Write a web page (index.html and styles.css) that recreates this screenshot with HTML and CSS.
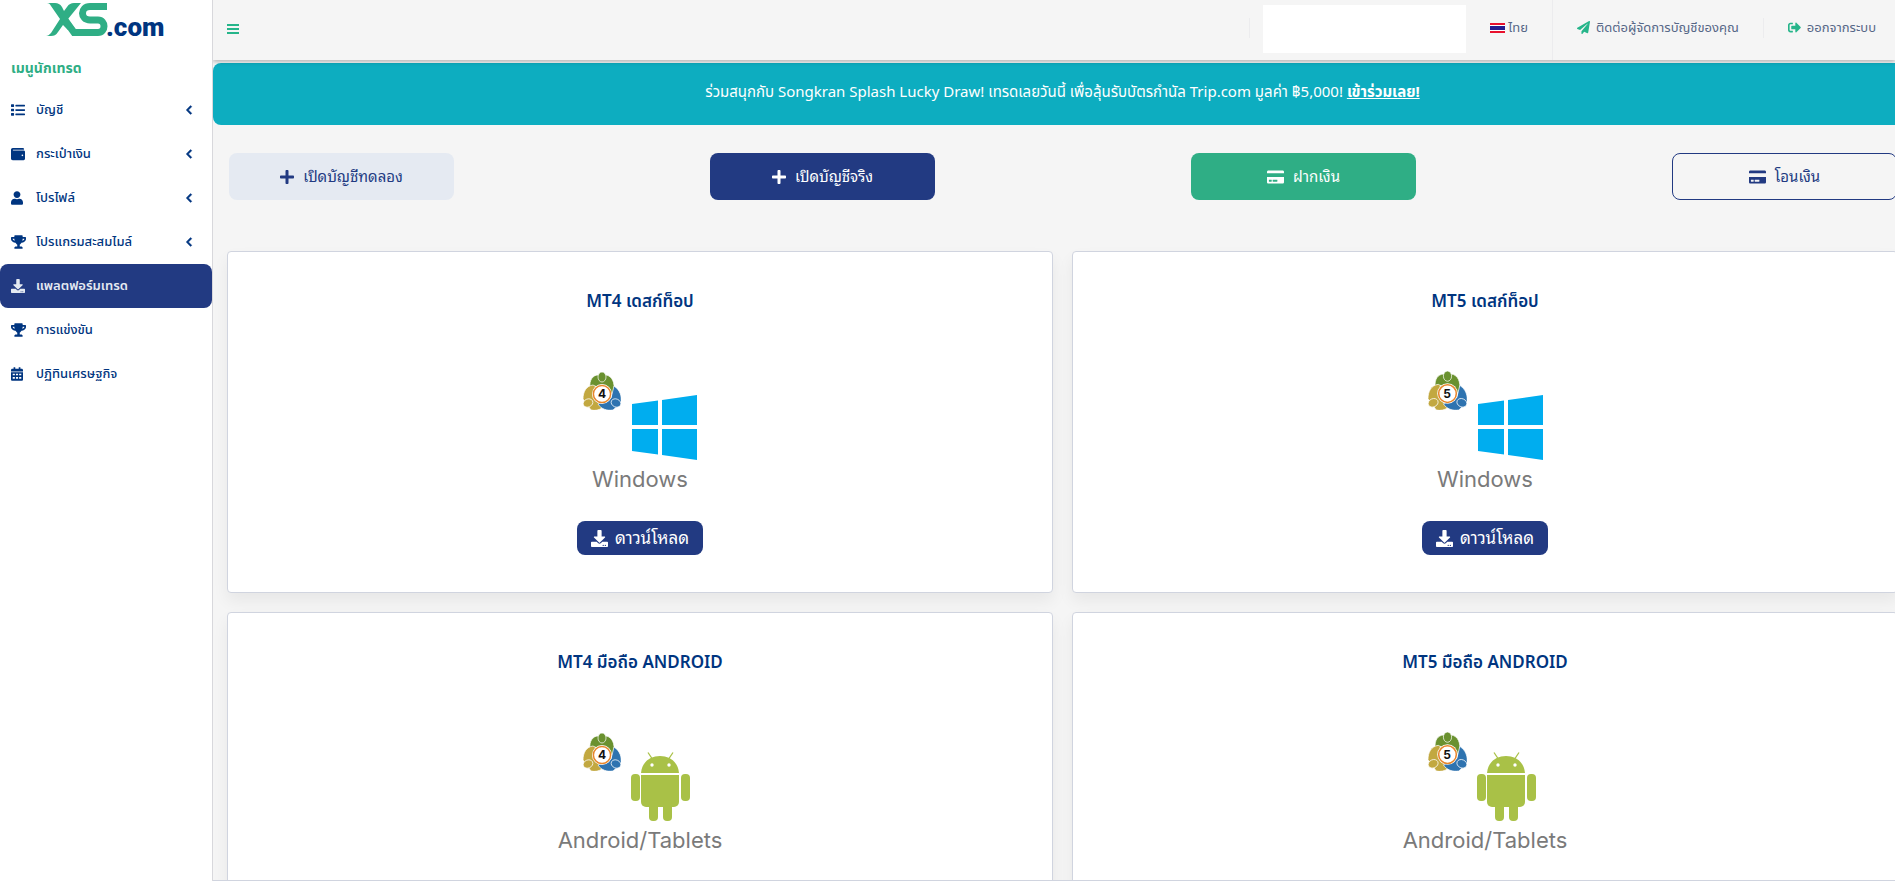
FILE: index.html
```
<!DOCTYPE html>
<html lang="th">
<head>
  <meta charset="UTF-8">
  <meta name="viewport" content="width=device-width, initial-scale=1.0">
  <title>XS.com - แพลตฟอร์มเทรด</title>
  <link rel="stylesheet" href="styles.css">
</head>
<body>
  <!-- shared icons -->
  <svg class="sprite" aria-hidden="true">
    <symbol id="i-list" viewBox="0 0 512 512"><path d="M16 48h80a16 16 0 0 1 16 16v64a16 16 0 0 1-16 16H16a16 16 0 0 1-16-16V64a16 16 0 0 1 16-16zm0 160h80a16 16 0 0 1 16 16v64a16 16 0 0 1-16 16H16a16 16 0 0 1-16-16v-64a16 16 0 0 1 16-16zm0 160h80a16 16 0 0 1 16 16v64a16 16 0 0 1-16 16H16a16 16 0 0 1-16-16v-64a16 16 0 0 1 16-16zM176 64h320a16 16 0 0 1 16 16v32a16 16 0 0 1-16 16H176a16 16 0 0 1-16-16V80a16 16 0 0 1 16-16zm0 160h320a16 16 0 0 1 16 16v32a16 16 0 0 1-16 16H176a16 16 0 0 1-16-16v-32a16 16 0 0 1 16-16zm0 160h320a16 16 0 0 1 16 16v32a16 16 0 0 1-16 16H176a16 16 0 0 1-16-16v-32a16 16 0 0 1 16-16z"/></symbol>
    <symbol id="i-wallet" viewBox="0 0 512 512"><path d="M461.2 128H80c-8.84 0-16-7.16-16-16s7.16-16 16-16h384c8.84 0 16-7.16 16-16 0-26.51-21.49-48-48-48H64C28.65 32 0 60.65 0 96v320c0 35.35 28.65 64 64 64h397.2c28.02 0 50.8-21.53 50.8-48V176c0-26.47-22.78-48-50.8-48zM416 336c-17.67 0-32-14.33-32-32s14.33-32 32-32 32 14.33 32 32-14.33 32-32 32z"/></symbol>
    <symbol id="i-user" viewBox="0 0 448 512"><path d="M224 256c70.7 0 128-57.3 128-128S294.7 0 224 0 96 57.3 96 128s57.3 128 128 128zm89.6 32h-16.7c-22.2 10.2-46.9 16-72.9 16s-50.6-5.8-72.9-16h-16.7C60.2 288 0 348.2 0 422.4V464c0 26.5 21.5 48 48 48h352c26.5 0 48-21.5 48-48v-41.6c0-74.2-60.2-134.4-134.4-134.4z"/></symbol>
    <symbol id="i-trophy" viewBox="0 0 576 512"><path d="M552 64H448V24c0-13.3-10.7-24-24-24H152c-13.3 0-24 10.7-24 24v40H24C10.7 64 0 74.7 0 88v56c0 35.7 22.5 72.4 61.9 100.7 31.5 22.7 69.8 37.1 110 41.7C203.3 338.5 240 360 240 360v72h-48c-35.3 0-64 20.7-64 56v12c0 6.6 5.4 12 12 12h296c6.6 0 12-5.4 12-12v-12c0-35.3-28.7-56-64-56h-48v-72s36.7-21.5 68.1-73.6c40.3-4.6 78.6-19 110-41.7 39.3-28.3 61.9-65 61.9-100.7V88c0-13.3-10.7-24-24-24zM99.3 192.8C74.9 175.2 64 155.6 64 144v-16h64.2c1 32.6 5.8 61.2 12.8 86.2-15.1-5.2-29.2-12.4-41.7-21.4zM512 144c0 16.1-17.7 36.1-35.3 48.8-12.5 9-26.7 16.2-41.8 21.4 7-25 11.8-53.6 12.8-86.2H512v16z"/></symbol>
    <symbol id="i-download" viewBox="0 0 512 512"><path d="M216 0h80c13.3 0 24 10.7 24 24v168h87.7c17.8 0 26.7 21.5 14.1 34.1L269.7 378.3c-7.5 7.5-19.8 7.5-27.3 0L90.1 226.1c-12.6-12.6-3.7-34.1 14.1-34.1H192V24c0-13.3 10.7-24 24-24zm296 376v112c0 13.3-10.7 24-24 24H24c-13.3 0-24-10.7-24-24V376c0-13.3 10.7-24 24-24h146.7l49 49c20.1 20.1 52.5 20.1 72.6 0l49-49H488c13.3 0 24 10.7 24 24zm-124 88c0-11-9-20-20-20s-20 9-20 20 9 20 20 20 20-9 20-20zm64 0c0-11-9-20-20-20s-20 9-20 20 9 20 20 20 20-9 20-20z"/></symbol>
    <symbol id="i-calendar" viewBox="0 0 448 512"><path fill-rule="evenodd" d="M0 160v-48c0-26 22-48 48-48h48V12c0-7 5-12 12-12h40c7 0 12 5 12 12v52h128V12c0-7 5-12 12-12h40c7 0 12 5 12 12v52h48c26 0 48 22 48 48v48zM0 192h448v272c0 26-22 48-48 48H48c-26 0-48-22-48-48zM64 244v56h80v-56zM184 244v56h80v-56zM304 244v56h80v-56zM64 372v60h80v-60zM184 372v60h80v-60zM304 372v60h80v-60z"/></symbol>
    <symbol id="i-left" viewBox="0 0 320 512"><path stroke="currentColor" stroke-width="30" d="M34.52 239.03L228.87 44.69c9.37-9.37 24.57-9.37 33.94 0l22.67 22.67c9.36 9.36 9.37 24.52.04 33.9L131.49 256l154.02 154.75c9.34 9.38 9.32 24.54-.04 33.9l-22.67 22.67c-9.37 9.37-24.57 9.37-33.94 0L34.52 272.97c-9.37-9.37-9.37-24.57 0-33.94z"/></symbol>
    <symbol id="i-plus" viewBox="0 0 448 512"><path d="M416 208H272V64c0-17.67-14.33-32-32-32h-32c-17.67 0-32 14.33-32 32v144H32c-17.67 0-32 14.33-32 32v32c0 17.67 14.33 32 32 32h144v144c0 17.67 14.33 32 32 32h32c17.67 0 32-14.33 32-32V304h144c17.67 0 32-14.33 32-32v-32c0-17.67-14.33-32-32-32z"/></symbol>
    <symbol id="i-card" viewBox="0 0 576 512"><path d="M0 432c0 26.5 21.5 48 48 48h480c26.5 0 48-21.5 48-48V256H0v176zm192-68c0-6.6 5.4-12 12-12h136c6.6 0 12 5.4 12 12v40c0 6.6-5.4 12-12 12H204c-6.6 0-12-5.4-12-12v-40zm-128 0c0-6.6 5.4-12 12-12h72c6.6 0 12 5.4 12 12v40c0 6.6-5.4 12-12 12H76c-6.6 0-12-5.4-12-12v-40zM576 80v48H0V80c0-26.5 21.5-48 48-48h480c26.5 0 48 21.5 48 48z"/></symbol>
    <symbol id="i-plane" viewBox="0 0 512 512"><path d="M476 3.2L12.5 270.6c-18.1 10.4-15.8 35.6 2.2 43.2L121 358.4l287.3-253.2c5.5-4.9 13.3 2.6 8.6 8.3L176 407v80.5c0 23.6 28.5 32.9 42.5 15.8L282 426l124.6 52.2c14.2 6 30.4-2.9 33-18.2l72-432C515 7.8 493.3-6.8 476 3.2z"/></symbol>
    <symbol id="i-logout" viewBox="0 0 512 512"><path d="M497 273L329 441c-15 15-41 4.5-41-17v-96H152c-13.3 0-24-10.7-24-24v-96c0-13.3 10.7-24 24-24h136V88c0-21.4 25.9-32 41-17l168 168c9.3 9.4 9.3 24.6 0 34zM192 436v-40c0-6.6-5.4-12-12-12H96c-17.7 0-32-14.3-32-32V160c0-17.7 14.3-32 32-32h84c6.6 0 12-5.4 12-12V76c0-6.6-5.4-12-12-12H96c-53 0-96 43-96 96v192c0 53 43 96 96 96h84c6.6 0 12-5.4 12-12z"/></symbol>
    <!-- three people round a ring -->
    <symbol id="mt-logo" viewBox="0 0 38 38">
      <g stroke="#fff" stroke-width=".7">
        <path fill="#6a912f" d="M7 16C6 8 10 3 15 3h8c6 1 9 7 8 17l-5 3-14-9z"/>
        <path fill="#c2a840" d="M10 13C3 14 0 20 0 27l8 11c4 1 8 0 11-2V18z"/>
        <path fill="#2e73b0" d="M31 14c6 4 8 10 7 17l-8 7c-6 1-12-1-15-6l13-6z"/>
        <ellipse fill="#6a912f" cx="19" cy="5" rx="4" ry="5"/>
        <ellipse fill="#c2a840" cx="5" cy="31" rx="5" ry="4" transform="rotate(-25 5 31)"/>
        <ellipse fill="#2e73b0" cx="33" cy="31" rx="5" ry="4" transform="rotate(25 33 31)"/>
      </g>
      <circle cx="19" cy="22" r="10" fill="#fff"/>
      <circle cx="19" cy="22" r="8.6" fill="#fff" stroke="#e8862a" stroke-width="1.5"/>
    </symbol>
    <symbol id="windows" viewBox="0 0 65 65"><path fill="#00adef" d="M0 9l26-3.500V30H0zM30 5l35-5v30H30zM0 34h26v25.500L0 56zM30 34h35v31l-35-5z"/></symbol>
    <symbol id="android" viewBox="0 0 59 69">
      <g fill="#a9c147">
        <path d="M10 21C11 10 19 4 29 4s18 6 19 17z"/>
        <path d="M10 23h38v27a5 5 0 0 1-5 5H15a5 5 0 0 1-5-5z"/>
        <rect x="0" y="22" width="9" height="27" rx="4"/>
        <rect x="50" y="22" width="9" height="27" rx="4"/>
        <rect x="18" y="48" width="9" height="21" rx="4"/>
        <rect x="32" y="48" width="9" height="21" rx="4"/>
      </g>
      <path d="M17 .5l4 6M42 .5l-4 6" stroke="#a9c147" stroke-width="1.300" fill="none"/>
      <circle cx="21" cy="13" r="1.700" fill="#fff"/>
      <circle cx="38" cy="13" r="1.700" fill="#fff"/>
    </symbol>
  </svg>

  <aside class="sidebar">
    <a href="#" class="logo" aria-label="XS.com">
      <svg width="124" height="44" viewBox="0 0 124 44">
        <path fill="#2fae85" d="M1 3h8c3 0 5 1 7 4l2 4 3-4c2-3 4-4 7-4h7L22 19l8 11h-8l-5-5-5 7c-2 3-4 4-7 4H0c2 0 3-1 5-3l9-14L5 6C4 4 3 3 1 3z"/>
        <path fill="none" stroke="#2fae85" stroke-width="7" d="M61 6.500H44c-10 0-10 13.500 0 13.500h8c8 0 8 12.500 0 12.500H28L19 20"/>
        <text class="logo-text" x="60" y="36">.com</text>
      </svg>
    </a>
    <h2 class="menu-title">เมนูนักเทรด</h2>
    <nav class="menu">
      <a href="#"><svg class="icon"><use href="#i-list"/></svg><span>บัญชี</span><svg class="arrow"><use href="#i-left"/></svg></a>
      <a href="#"><svg class="icon"><use href="#i-wallet"/></svg><span>กระเป๋าเงิน</span><svg class="arrow"><use href="#i-left"/></svg></a>
      <a href="#"><svg class="icon narrow"><use href="#i-user"/></svg><span>โปรไฟล์</span><svg class="arrow"><use href="#i-left"/></svg></a>
      <a href="#"><svg class="icon wide"><use href="#i-trophy"/></svg><span>โปรแกรมสะสมไมล์</span><svg class="arrow"><use href="#i-left"/></svg></a>
      <a href="#" class="active"><svg class="icon"><use href="#i-download"/></svg><span>แพลตฟอร์มเทรด</span></a>
      <a href="#"><svg class="icon wide"><use href="#i-trophy"/></svg><span>การแข่งขัน</span></a>
      <a href="#"><svg class="icon narrow"><use href="#i-calendar"/></svg><span>ปฏิทินเศรษฐกิจ</span></a>
    </nav>
  </aside>

  <div class="page">
    <header class="topbar">
      <button class="toggle" aria-label="เมนู"><svg width="12" height="10" viewBox="0 0 12 10"><path d="M0 0h12v2H0zM0 4h12v2H0zM0 8h12v2H0z"/></svg></button>
      <div class="divider"></div>
      <div class="account"><div class="account-box"></div></div>
      <a href="#" class="lang">
        <svg width="15" height="10" viewBox="0 0 15 10"><path fill="#e8112d" d="M0 0h15v10H0z"/><path fill="#fff" d="M0 2h15v6H0z"/><path fill="#241d8f" d="M0 3h15v4H0z"/></svg>
        ไทย
      </a>
      <a href="#" class="contact"><svg class="icon"><use href="#i-plane"/></svg>ติดต่อผู้จัดการบัญชีของคุณ</a>
      <div class="divider"></div>
      <a href="#" class="logout"><svg class="icon"><use href="#i-logout"/></svg>ออกจากระบบ</a>
    </header>

    <main class="content">
      <div class="banner">ร่วมสนุกกับ Songkran Splash Lucky Draw! เทรดเลยวันนี้ เพื่อลุ้นรับบัตรกำนัล Trip.com มูลค่า ฿5,000! <a href="#">เข้าร่วมเลย!</a></div>

      <div class="actions">
        <button class="btn demo"><svg class="icon"><use href="#i-plus"/></svg><span>เปิดบัญชีทดลอง</span></button>
        <button class="btn live"><svg class="icon"><use href="#i-plus"/></svg><span>เปิดบัญชีจริง</span></button>
        <button class="btn deposit"><svg class="icon"><use href="#i-card"/></svg><span>ฝากเงิน</span></button>
        <button class="btn transfer"><svg class="icon"><use href="#i-card"/></svg><span>โอนเงิน</span></button>
      </div>

      <div class="cards">
        <section class="card">
          <h3>MT4 เดสก์ท็อป</h3>
          <svg class="picture" viewBox="0 0 120 92"><use href="#mt-logo" x="3" y="2" width="38" height="38"/><text class="version" x="22" y="28">4</text><use href="#windows" x="52" y="25" width="65" height="65"/></svg>
          <p>Windows</p>
          <button class="download"><svg class="icon"><use href="#i-download"/></svg><span>ดาวน์โหลด</span></button>
        </section>
        <section class="card">
          <h3>MT5 เดสก์ท็อป</h3>
          <svg class="picture" viewBox="0 0 120 92"><use href="#mt-logo" x="3" y="1" width="39" height="39"/><text class="version" x="22" y="28">5</text><use href="#windows" x="53" y="25" width="65" height="65"/></svg>
          <p>Windows</p>
          <button class="download"><svg class="icon"><use href="#i-download"/></svg><span>ดาวน์โหลด</span></button>
        </section>
        <section class="card">
          <h3>MT4 มือถือ ANDROID</h3>
          <svg class="picture" viewBox="0 0 120 92"><use href="#mt-logo" x="3" y="2" width="38" height="38"/><text class="version" x="22" y="28">4</text><use href="#android" x="51" y="21" width="59" height="69"/></svg>
          <p>Android/Tablets</p>
        </section>
        <section class="card">
          <h3>MT5 มือถือ ANDROID</h3>
          <svg class="picture" viewBox="0 0 120 92"><use href="#mt-logo" x="3" y="1" width="39" height="39"/><text class="version" x="22" y="28">5</text><use href="#android" x="52" y="21" width="59" height="69"/></svg>
          <p>Android/Tablets</p>
        </section>
      </div>
    </main>
  </div>
</body>
</html>
```
FILE: styles.css
```
* {
  box-sizing: border-box;
}
body {
  margin: 0;
  height: 100vh;
  display: flex;
  overflow: hidden;
  background: #f5f5f5;
  color: #003580;
  font-family: "Noto Sans", "Noto Sans Thai", sans-serif;
  font-size: 16px;
}
a {
  color: inherit;
  text-decoration: none;
}
button {
  font-family: "Noto Sans Thai Looped", "Noto Looped Thai", "Loma", "Noto Sans", sans-serif;
  cursor: pointer;
}
svg {
  fill: currentColor;
  flex-shrink: 0;
}
.sprite {
  position: absolute;
  width: 0;
  height: 0;
}

/* sidebar */
.sidebar {
  width: 213px;
  flex-shrink: 0;
  background: #fff;
  border-right: 1px solid #d8d8dc;
}
.logo {
  display: block;
  height: 48px;
  padding-left: 46px;
}
.logo svg {
  display: block;
}
.logo-text {
  font: 900 26px Roboto, sans-serif;
  fill: #003580;
}
.menu-title {
  margin: 0;
  padding-left: 11px;
  height: 40px;
  line-height: 40px;
  font-size: 14px;
  font-weight: 700;
  color: #2fae85;
}
.menu a {
  display: flex;
  align-items: center;
  height: 44px;
  padding: 0 18px 0 11px;
  font-size: 13px;
  font-weight: 500;
  border-radius: 8px;
}
.menu span {
  flex: 1;
}
.menu .icon {
  width: 14px;
  height: 14px;
  margin-right: 11px;
}
.menu .narrow {
  width: 12px;
  margin-right: 13px;
}
.menu .wide {
  width: 15px;
  margin-right: 10px;
}
.menu .arrow {
  width: 10px;
  height: 10px;
}
.menu .active {
  background: #223a82;
  color: #e5eaf2;
  font-weight: 600;
}

/* top bar */
.page {
  flex: 1;
  min-width: 0;
  display: flex;
  flex-direction: column;
  overflow: hidden;
  border-bottom: 1px solid #d0d4df;
}
.topbar {
  display: flex;
  align-items: center;
  height: 60px;
  flex-shrink: 0;
  z-index: 1;
  box-shadow: 0 2px 4px rgba(0, 0, 0, 0.25);
  background: #f5f5f5;
  font-size: 13px;
  color: #566787;
}
.topbar a {
  display: flex;
  align-items: center;
  gap: 6px;
  padding-bottom: 5px;
}
.topbar .icon {
  width: 13px;
  height: 13px;
  color: #26b58a;
}
.toggle {
  margin-right: auto;
  padding: 0 14px 5px;
  border: 0;
  background: none;
  color: #26b58a;
}
.divider {
  width: 1px;
  height: 20px;
  margin-bottom: 4px;
  background: #ececee;
}
.account {
  height: 60px;
  padding: 5px 0 7px 13px;
}
.account-box {
  width: 203px;
  height: 48px;
  background: #fff;
}
.topbar .lang {
  gap: 3px;
  height: 60px;
  padding-left: 24px;
  padding-right: 24px;
  border-right: 1px solid #ececee;
}
.topbar .contact {
  padding-left: 24px;
  padding-right: 24px;
}
.topbar .logout {
  padding-left: 24px;
  padding-right: 19px;
}

.content {
  margin-right: -17px;
  padding-top: 3px;
}
.banner {
  height: 62px;
  padding-top: 16px;
  line-height: 24px;
  font-size: 15px;
  text-align: center;
  color: #fff;
  background: #0dadc0;
  border-radius: 8px;
}
.banner a {
  font-weight: 700;
  text-decoration: underline;
}
.actions {
  display: flex;
  justify-content: space-between;
  padding: 28px 15px 51px 16px;
}
.btn {
  display: flex;
  align-items: center;
  justify-content: center;
  gap: 9px;
  width: 225px;
  height: 47px;
  border: 1px solid transparent;
  border-radius: 8px;
  font-size: 15px;
}
.btn span,
.download span {
  padding-bottom: 4px;
}
.btn .icon {
  width: 14px;
  height: 16px;
}
.demo {
  background: #e5eaf2;
  color: #223a82;
}
.live {
  background: #223a82;
  color: #fff;
}
.deposit {
  background: #2fae85;
  color: #fff;
}
.transfer {
  background: none;
  border-color: #223a82;
  color: #223a82;
}
.deposit .icon,
.transfer .icon {
  width: 17px;
}

/* platform cards */
.cards {
  display: grid;
  grid-template-columns: 1fr 1fr;
  gap: 19px;
  padding: 0 14px;
}
.card {
  display: flex;
  flex-direction: column;
  align-items: center;
  padding: 37px 20px 37px;
  background: #fff;
  border: 1px solid #d0d4df;
  border-radius: 4px;
  box-shadow: 0 8px 16px rgba(0, 0, 0, 0.06);
}
.card h3 {
  margin: 0;
  line-height: 24px;
  font-size: 17px;
  font-weight: 600;
}
.picture {
  width: 120px;
  height: 92px;
  margin-top: 57px;
}
.version {
  font: bold 12px Inter, sans-serif;
  fill: #111;
  text-anchor: middle;
}
.card p {
  margin: 3px 0 28px;
  line-height: 28px;
  font-family: Inter, sans-serif;
  font-size: 22px;
  color: #7a7a7a;
}
.download {
  display: flex;
  align-items: center;
  gap: 7px;
  height: 34px;
  padding: 0 14px;
  border: 0;
  border-radius: 8px;
  background: #223a82;
  color: #fff;
  font-size: 17px;
}
.download .icon {
  width: 17px;
  height: 17px;
}
```
